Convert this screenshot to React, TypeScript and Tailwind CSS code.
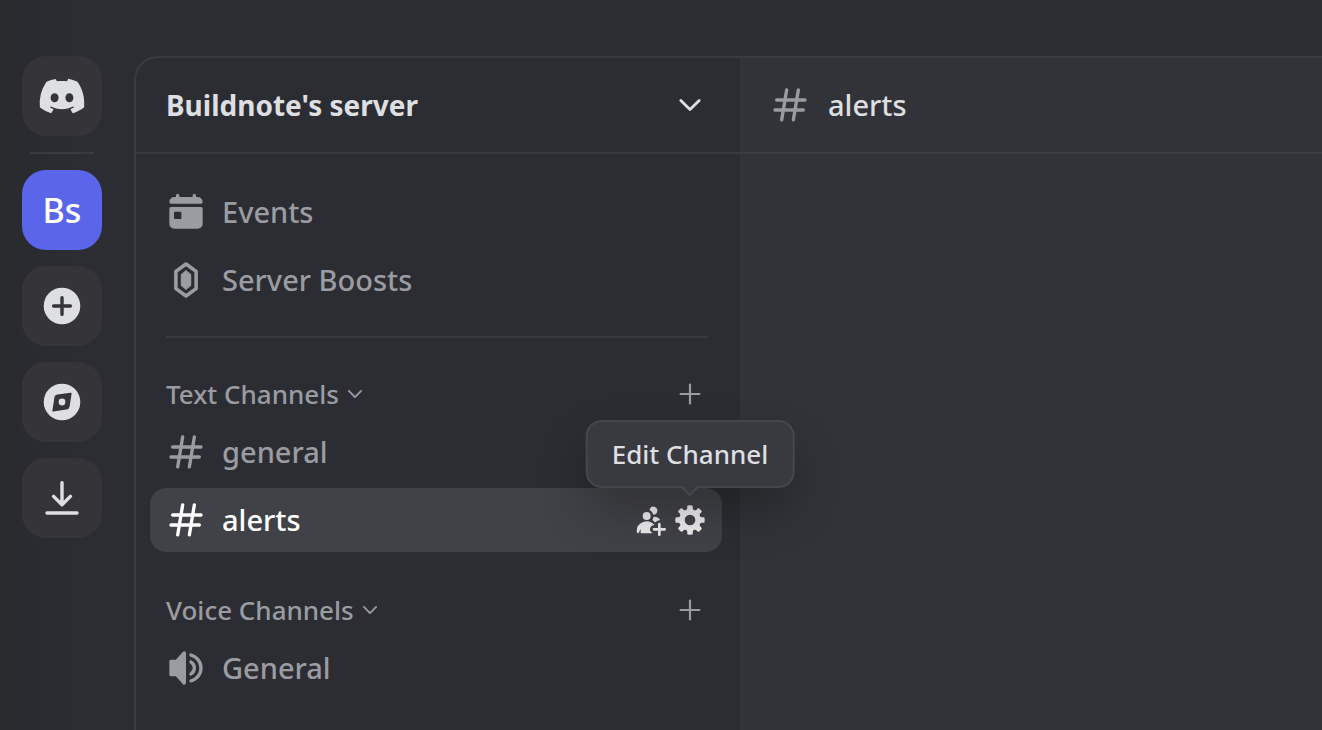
import type { ReactNode } from 'react';

type IconProps = { className?: string };

function DiscordIcon({ className }: IconProps) {
  return (
    <svg viewBox="0 0 24 24" className={className} fill="currentColor" aria-hidden="true">
      <path d="M19.73 4.87a18.2 18.2 0 0 0-4.6-1.44c-.21.4-.4.8-.58 1.21-1.69-.25-3.4-.25-5.1 0-.18-.41-.37-.82-.59-1.2-1.6.27-3.14.75-4.6 1.43A19.04 19.04 0 0 0 .96 17.7a18.43 18.43 0 0 0 5.63 2.87c.46-.62.86-1.28 1.2-1.98-.65-.25-1.29-.55-1.9-.92.17-.12.32-.24.47-.37 3.58 1.7 7.7 1.7 11.28 0l.46.37c-.6.36-1.25.67-1.9.92.35.7.75 1.35 1.2 1.98 2.03-.63 3.94-1.6 5.64-2.87.47-4.87-.78-9.09-3.3-12.83ZM8.3 15.12c-1.1 0-2-1.02-2-2.27 0-1.24.88-2.26 2-2.26s2.02 1.02 2 2.26c0 1.25-.89 2.27-2 2.27Zm7.4 0c-1.1 0-2-1.02-2-2.27 0-1.24.88-2.26 2-2.26s2.02 1.02 2 2.26c0 1.25-.88 2.27-2 2.27Z" />
    </svg>
  );
}

function HashIcon({ className }: IconProps) {
  return (
    <svg viewBox="0 0 24 24" className={className} fill="currentColor" aria-hidden="true">
      <path
        fillRule="evenodd"
        d="M10.99 3.16A1 1 0 1 0 9 2.84L8.15 8H4a1 1 0 0 0 0 2h3.82l-.67 4H3a1 1 0 1 0 0 2h3.82l-.8 4.84a1 1 0 0 0 1.97.32L8.85 16h4.97l-.8 4.84a1 1 0 0 0 1.97.32l.86-5.16H20a1 1 0 1 0 0-2h-3.82l.67-4H21a1 1 0 1 0 0-2h-3.82l.8-4.84a1 1 0 1 0-1.97-.32L15.15 8h-4.97l.8-4.84ZM14.15 14l.67-4H9.85l-.67 4h4.97Z"
      />
    </svg>
  );
}

function CalendarIcon({ className }: IconProps) {
  return (
    <svg viewBox="0 0 24 24" className={className} fill="currentColor" aria-hidden="true">
      <path d="M7 1a1 1 0 0 1 1 1v.75c0 .14.11.25.25.25h7.5c.14 0 .25-.11.25-.25V2a1 1 0 1 1 2 0v.75c0 .14.11.25.25.25H19a3 3 0 0 1 3 3 1 1 0 0 1-1 1H3a1 1 0 0 1-1-1 3 3 0 0 1 3-3h.75C5.89 3 6 2.89 6 2.75V2a1 1 0 0 1 1-1Z" />
      <path
        fillRule="evenodd"
        d="M2 10a1 1 0 0 1 1-1h18a1 1 0 0 1 1 1v9a3 3 0 0 1-3 3H5a3 3 0 0 1-3-3v-9Zm3.3 1.8a.5.5 0 0 0-.5.5v3.4c0 .28.22.5.5.5h3.4a.5.5 0 0 0 .5-.5v-3.4a.5.5 0 0 0-.5-.5h-3.4Z"
      />
    </svg>
  );
}

function BoostIcon({ className }: IconProps) {
  return (
    <svg viewBox="0 0 40 40" className={className} aria-hidden="true">
      <path
        d="M20 4 30.1 11.4v17.2L20 36 9.9 28.6V11.4Z"
        fill="none"
        stroke="currentColor"
        strokeWidth="3.6"
        strokeLinejoin="round"
      />
      <path d="M20 10 25.2 14.6v10.8L20 30l-5.2-4.6V14.6Z" fill="currentColor" />
    </svg>
  );
}

function SpeakerIcon({ className }: IconProps) {
  return (
    <svg viewBox="0 0 24 24" className={className} fill="currentColor" aria-hidden="true">
      <path d="M12 3a1 1 0 0 0-1-1h-.06a1 1 0 0 0-.74.32L5.92 7H3a1 1 0 0 0-1 1v8a1 1 0 0 0 1 1h2.92l4.28 4.68a1 1 0 0 0 .74.32H11a1 1 0 0 0 1-1V3ZM15.1 20.75c-.58.14-1.1-.33-1.1-.92v-.03c0-.5.37-.92.85-1.05a7 7 0 0 0 0-13.5A1.11 1.11 0 0 1 14 4.2v-.03c0-.6.52-1.06 1.1-.92a9 9 0 0 1 0 17.5Z" />
      <path d="M15.16 16.51c-.57.28-1.16-.2-1.16-.83v-.14c0-.43.28-.8.63-1.02a3 3 0 0 0 0-5.04c-.35-.23-.63-.6-.63-1.02v-.14c0-.63.59-1.1 1.16-.83a5 5 0 0 1 0 9.02Z" />
    </svg>
  );
}

function InviteIcon({ className }: IconProps) {
  return (
    <svg viewBox="0 0 24 24" className={className} fill="currentColor" aria-hidden="true">
      <path d="M19 14a1 1 0 0 1 1 1v3h3a1 1 0 0 1 0 2h-3v3a1 1 0 0 1-2 0v-3h-3a1 1 0 1 1 0-2h3v-3a1 1 0 0 1 1-1Z" />
      <path d="M15.4 9.5c1.5 0 3 .8 3.9 1.9.3.4 0 .9-.5.9-1 0-1.9.5-2.4 1.2-.2.3-.6.3-.9.1-.4-.4-.8-.7-1.2-1-.4-.3-.5-.8-.3-1.2.2-.4.4-.9.5-1.3.1-.4.5-.6.9-.6Z" />
      <path d="M14.5 8a3 3 0 1 0-2.7-4.3c-.2.4.06.86.44 1.12a5 5 0 0 1 2.14 3.08c.01.06.06.1.12.1ZM15.19 15.61c.13.16.02.39-.19.39a3 3 0 0 0-1.52 5.59c.2.12.26.41.02.41h-8a.5.5 0 0 1-.5-.5v-2.1c0-.25-.31-.33-.42-.1-.32.67-.67 1.58-.88 2.54a.2.2 0 0 1-.2.16A1.5 1.5 0 0 1 2 20.5a7.5 7.5 0 0 1 13.19-4.89ZM9.5 12a3 3 0 1 0 0-6 3 3 0 0 0 0 6Z" />
    </svg>
  );
}

function GearIcon({ className }: IconProps) {
  return (
    <svg viewBox="0 0 24 24" className={className} fill="currentColor" aria-hidden="true">
      <path
        fillRule="evenodd"
        d="M10.56 1.1c-.46.05-.7.53-.64.98.18 1.16-.19 2.2-.98 2.53-.8.33-1.79-.15-2.49-1.1-.27-.36-.78-.52-1.14-.24-.77.59-1.45 1.27-2.04 2.04-.28.36-.12.87.24 1.14.96.7 1.43 1.7 1.1 2.49-.33.8-1.37 1.16-2.53.98-.45-.07-.93.18-.99.64a11.1 11.1 0 0 0 0 2.88c.06.46.54.7.99.64 1.16-.18 2.2.19 2.53.98.33.8-.14 1.79-1.1 2.49-.36.27-.52.78-.24 1.14.59.77 1.27 1.45 2.04 2.04.36.28.87.12 1.14-.24.7-.95 1.7-1.43 2.49-1.1.8.33 1.16 1.37.98 2.53-.07.45.18.93.64.99a11.1 11.1 0 0 0 2.88 0c.46-.06.7-.54.64-.99-.18-1.16.19-2.2.98-2.53.8-.33 1.79.14 2.49 1.1.27.36.78.52 1.14.24.77-.59 1.45-1.27 2.04-2.04.28-.36.12-.87-.24-1.14-.96-.7-1.43-1.7-1.1-2.49.33-.8 1.37-1.16 2.53-.98.45.07.93-.18.99-.64a11.1 11.1 0 0 0 0-2.88c-.06-.46-.54-.7-.99-.64-1.16.18-2.2-.19-2.53-.98-.33-.8.14-1.79 1.1-2.49.36-.27.52-.78.24-1.14a11.07 11.07 0 0 0-2.04-2.04c-.36-.28-.87-.12-1.14.24-.7.96-1.7 1.43-2.49 1.1-.8-.33-1.16-1.37-.98-2.53.07-.45-.18-.93-.64-.99a11.1 11.1 0 0 0-2.88 0ZM16 12a4 4 0 1 1-8 0 4 4 0 0 1 8 0Z"
      />
    </svg>
  );
}

function PlusIcon({ className }: IconProps) {
  return (
    <svg viewBox="0 0 24 24" className={className} aria-hidden="true">
      <path d="M12 2.6v18.8M2.6 12h18.8" fill="none" stroke="currentColor" strokeWidth="2.2" strokeLinecap="round" />
    </svg>
  );
}

function ChevronIcon({ className }: IconProps) {
  return (
    <svg viewBox="0 0 24 24" className={className} aria-hidden="true">
      <path
        d="m2.8 7.4 9.2 9.2 9.2-9.2"
        fill="none"
        stroke="currentColor"
        strokeWidth="2.8"
        strokeLinecap="round"
        strokeLinejoin="round"
      />
    </svg>
  );
}

function AddServerIcon() {
  return (
    <svg viewBox="0 0 40 40" className="size-10" aria-hidden="true">
      <circle cx="20" cy="20" r="18.3" fill="currentColor" />
      <path d="M20 11.6v16.8M11.6 20h16.8" stroke="#353439" strokeWidth="3.4" strokeLinecap="round" />
    </svg>
  );
}

function DiscoverIcon() {
  return (
    <svg viewBox="0 0 40 40" className="size-10" aria-hidden="true">
      <circle cx="20" cy="20" r="18.3" fill="currentColor" />
      <path
        d="M15.6 12.4 28.6 10.7a.9.9 0 0 1 1 1L27.6 24.6a3.6 3.6 0 0 1-3.2 3L11.4 29.5a.9.9 0 0 1-1-1L12.4 15.5a3.6 3.6 0 0 1 3.2-3.1Z"
        fill="#353439"
      />
      <circle cx="20" cy="20" r="3.4" fill="currentColor" />
    </svg>
  );
}

function DownloadIcon() {
  return (
    <svg viewBox="0 0 40 40" className="size-10" aria-hidden="true">
      <path
        d="M20 4.6v22M11.6 18.4 20 26.8l8.4-8.4M5 35h30"
        fill="none"
        stroke="currentColor"
        strokeWidth="3.4"
        strokeLinecap="round"
        strokeLinejoin="round"
      />
    </svg>
  );
}

function RailButton({ label, active, children }: { label: string; active?: boolean; children: ReactNode }) {
  return (
    <button
      type="button"
      aria-label={label}
      className={`flex size-20 items-center justify-center rounded-3xl ${
        active ? 'bg-[#5a65ea] text-white' : 'bg-[#353439] text-[#dedfe2]'
      }`}
    >
      {children}
    </button>
  );
}

function NavRow({ icon, label }: { icon: ReactNode; label: string }) {
  return (
    <a href="#" className="flex h-16 items-center gap-4 rounded-2xl px-4 text-[#9b9ca1]">
      {icon}
      <span className="text-[29px] leading-10 font-medium">{label}</span>
    </a>
  );
}

function CategoryHeader({ label }: { label: string }) {
  return (
    <div className="flex h-12 items-center justify-between px-4 text-[#9b9ca1]">
      <button type="button" className="flex items-center gap-2">
        <span className="text-[26px] leading-9 font-medium">{label}</span>
        <ChevronIcon className="size-4" />
      </button>
      <button type="button" aria-label="Create Channel" className="flex w-8 justify-center">
        <PlusIcon className="size-6" />
      </button>
    </div>
  );
}

function Tooltip({ children }: { children: ReactNode }) {
  return (
    <div
      role="tooltip"
      className="absolute bottom-full left-1/2 z-10 mb-4 -translate-x-1/2 rounded-2xl border-2 border-[#46474c] bg-[#393a3f] px-6 py-3 text-[26px] leading-10 font-medium whitespace-nowrap text-[#dedfe2] shadow-[0_24px_48px_rgba(0,0,0,0.24)]"
    >
      {children}
      <svg viewBox="0 0 16 10" className="absolute top-full left-1/2 h-[10px] w-4 -translate-x-1/2" aria-hidden="true">
        <path d="M0 0h16L8 8Z" fill="#393a3f" />
        <path d="M0 1 8 9l8-8" fill="none" stroke="#46474c" strokeWidth="2" />
      </svg>
    </div>
  );
}

export default function App() {
  return (
    <div className="flex min-h-screen flex-col bg-linear-to-r from-[#292a2e] to-[#2c2d32] to-[80px] pt-14 font-['Noto_Sans',sans-serif] text-[#dedfe2]">
      <div className="flex grow">
        <nav aria-label="Servers" className="flex w-[134px] shrink-0 flex-col gap-4 pl-[22px]">
          <RailButton label="Direct Messages">
            <DiscordIcon className="size-12" />
          </RailButton>
          <hr className="ml-2 w-16 border-t-2 border-[#3a3b40]" />
          <RailButton label="Buildnote's server" active>
            <span className="text-[34px] leading-10 font-medium">Bs</span>
          </RailButton>
          <RailButton label="Add a Server">
            <AddServerIcon />
          </RailButton>
          <RailButton label="Discover">
            <DiscoverIcon />
          </RailButton>
          <RailButton label="Download Apps">
            <DownloadIcon />
          </RailButton>
        </nav>

        <div className="flex min-w-0 grow rounded-tl-3xl border-t-2 border-l-2 border-[#3a3b40]">
          <aside className="w-[604px] shrink-0">
            <button
              type="button"
              className="flex h-24 w-full items-center justify-between border-b-2 border-[#3a3b40] pr-[38px] pl-[30px]"
            >
              <span className="text-[28px] leading-10 font-bold">Buildnote's server</span>
              <ChevronIcon className="size-6" />
            </button>

            <div className="pt-[26px] pr-[18px] pl-[14px]">
              <div className="flex flex-col gap-1">
                <NavRow icon={<CalendarIcon className="size-10" />} label="Events" />
                <NavRow icon={<BoostIcon className="size-10" />} label="Server Boosts" />
              </div>

              <hr className="mt-6 mr-[14px] ml-4 border-t-2 border-[#3a3b40]" />

              <section className="mt-8">
                <CategoryHeader label="Text Channels" />
                <div className="mt-[2px] flex flex-col gap-1">
                  <NavRow icon={<HashIcon className="size-10" />} label="general" />
                  <div className="flex h-16 items-center justify-between rounded-2xl bg-[#414247] px-4">
                    <a href="#" className="flex grow items-center gap-4 text-white">
                      <HashIcon className="size-10" />
                      <span className="text-[29px] leading-10 font-medium">alerts</span>
                    </a>
                    <div className="flex gap-2 text-[#ececed]">
                      <button type="button" aria-label="Invite to Channel">
                        <InviteIcon className="size-8" />
                      </button>
                      <div className="relative">
                        <button type="button" aria-label="Edit Channel" className="block">
                          <GearIcon className="size-8" />
                        </button>
                        <Tooltip>Edit Channel</Tooltip>
                      </div>
                    </div>
                  </div>
                </div>
              </section>

              <section className="mt-[34px]">
                <CategoryHeader label="Voice Channels" />
                <div className="mt-[2px]">
                  <NavRow icon={<SpeakerIcon className="size-10" />} label="General" />
                </div>
              </section>
            </div>
          </aside>

          <main className="min-w-0 grow bg-[#323338]">
            <header className="flex h-24 items-center gap-[18px] border-b-2 border-[#3c3d42] pl-[30px]">
              <HashIcon className="size-10 text-[#9b9ca1]" />
              <h1 className="text-[29px] leading-10 font-medium">alerts</h1>
            </header>
          </main>
        </div>
      </div>
    </div>
  );
}
